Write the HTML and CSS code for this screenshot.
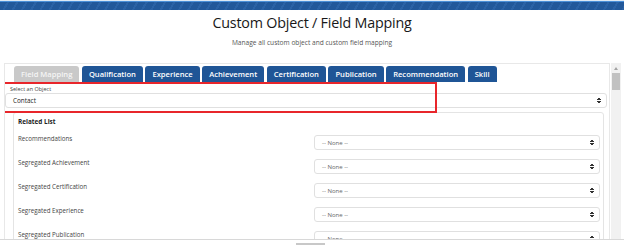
FILE: index.html
```html
<!DOCTYPE html>
<html>
<head>
<meta charset="utf-8">
<link rel="stylesheet" href="styles.css">
</head>
<body>
<div class="banner"><div class="banner-line"></div><div class="banner-band"></div></div>
<h1 class="title">Custom Object / Field Mapping</h1>
<p class="subtitle">Manage all custom object and custom field mapping</p>
<div class="main">
  <div class="panel">
    <div class="tabs">
      <span class="tab tab-active">Field Mapping</span>
      <span class="tab">Qualification</span>
      <span class="tab">Experience</span>
      <span class="tab">Achievement</span>
      <span class="tab">Certification</span>
      <span class="tab">Publication</span>
      <span class="tab">Recommendation</span>
      <span class="tab">Skill</span>
    </div>
    <div class="object-field">
      <div class="field-label">Select an Object</div>
      <div class="select select-wide"><span>Contact</span><span class="arrows"></span></div>
      <div class="highlight"></div>
    </div>
    <div class="related">
      <div class="related-head">Related List</div>
      <div class="row"><span class="row-label">Recommendations</span><div class="select select-row"><span class="none">-- None --</span><span class="arrows"></span></div></div>
      <div class="row"><span class="row-label">Segregated Achievement</span><div class="select select-row"><span class="none">-- None --</span><span class="arrows"></span></div></div>
      <div class="row"><span class="row-label">Segregated Certification</span><div class="select select-row"><span class="none">-- None --</span><span class="arrows"></span></div></div>
      <div class="row"><span class="row-label">Segregated Experience</span><div class="select select-row"><span class="none">-- None --</span><span class="arrows"></span></div></div>
      <div class="row"><span class="row-label">Segregated Publication</span><div class="select select-row"><span class="none">-- None --</span><span class="arrows"></span></div></div>
    </div>
  </div>
  <div class="vscroll">
    <div class="vscroll-up"></div>
    <div class="vscroll-thumb"></div>
  </div>
</div>
<div class="hscroll"><div class="hscroll-thumb"></div></div>
</body>
</html>
```
FILE: styles.css
```css
* { box-sizing: border-box; }
html, body { margin: 0; padding: 0; }
body {
  width: 624px;
  height: 247px;
  overflow: hidden;
  background: #fff;
  font-family: "Open Sans", "Noto Sans", sans-serif;
  color: #3e3e3c;
}
.banner { height: 11px; background: #fff; }
.banner-line { height: 2px; border-top: 1px solid #dce8f4; background: #4a8fd8; }
.banner-band {
  height: 8px;
  background: repeating-linear-gradient(120deg, #22589a 0 6px, #2b62a5 6px 8px);
}
.title {
  margin: 2px 0 0;
  text-align: center;
  font-size: 14.3px;
  line-height: 20px;
  font-weight: 500;
  color: #181818;
  letter-spacing: -0.2px;
}
.subtitle {
  margin: 6px 0 0;
  text-align: center;
  font-size: 6.6px;
  line-height: 8px;
  color: #555;
}
.main {
  margin-top: 16px;
  height: 177px;
  display: flex;
  border-bottom: 1px solid #d8d8d8;
}
.panel {
  position: relative;
  width: 606px;
  margin-left: 4px;
  border: 1px solid #e8e8e8;
  border-bottom: none;
  overflow: hidden;
}
.tabs {
  display: flex;
  gap: 2.5px;
  padding: 2px 0 0 9px;
}
.tab {
  height: 16px;
  padding: 0 7px;
  display: flex;
  align-items: center;
  background: #1f5596;
  color: #fff;
  font-size: 7.6px;
  font-weight: 600;
  border-radius: 3px 3px 0 0;
}
.tab-active { background: #c9c9c9; color: #f5f5f5; padding: 0 7px; }
.object-field { position: relative; padding: 4px 0 0 0; }
.field-label { font-size: 5.5px; line-height: 7px; color: #444; padding-left: 5px; }
.select {
  display: flex;
  align-items: center;
  justify-content: space-between;
  height: 15px;
  border: 1px solid #e0e0e0;
  border-radius: 3px;
  background: #fff;
  font-size: 6.4px;
  color: #222;
  padding: 0 5px 0 7px;
}
.select-wide { width: 602px; }
.arrows {
  width: 4px;
  height: 7px;
  background:
    linear-gradient(to bottom right, transparent 50%, #333 50%) 0 0 / 2px 3px no-repeat,
    linear-gradient(to bottom left, transparent 50%, #333 50%) 2px 0 / 2px 3px no-repeat,
    linear-gradient(to top right, transparent 50%, #333 50%) 0 4px / 2px 3px no-repeat,
    linear-gradient(to top left, transparent 50%, #333 50%) 2px 4px / 2px 3px no-repeat;
}
.highlight {
  position: absolute;
  left: -2px;
  top: 0;
  width: 434px;
  height: 31px;
  border: 2px solid #e8262b;
}
.related {
  margin: 4px 0 0 8px;
  width: 591px;
  border: 1px solid #e4e4e4;
  border-radius: 3px;
  padding: 4px 0 0 4px;
}
.related-head { font-size: 6.4px; font-weight: 700; color: #222; line-height: 10px; margin-bottom: 5px; }
.row {
  display: flex;
  justify-content: space-between;
  align-items: flex-start;
  height: 24px;
  padding-right: 3px;
}
.row-label { font-size: 6.2px; color: #444; line-height: 8px; padding-top: 3px; }
.select-row { width: 286px; margin-top: 3px; }
.none { color: #666; font-size: 6px; }
.vscroll {
  width: 10px;
  margin-left: 1px;
  background: #f1f1f1;
  display: flex;
  flex-direction: column;
  align-items: center;
}
.vscroll-up {
  margin-top: 4px;
  width: 0; height: 0;
  border-left: 2.5px solid transparent;
  border-right: 2.5px solid transparent;
  border-bottom: 3px solid #a3a3a3;
}
.vscroll-thumb { margin-top: 3px; width: 8px; height: 17px; background: #c1c1c1; }
.hscroll { height: 6px; display: flex; padding-left: 296px; padding-top: 3px; }
.hscroll-thumb { width: 29px; height: 2px; background: #c8c8c8; }
```
